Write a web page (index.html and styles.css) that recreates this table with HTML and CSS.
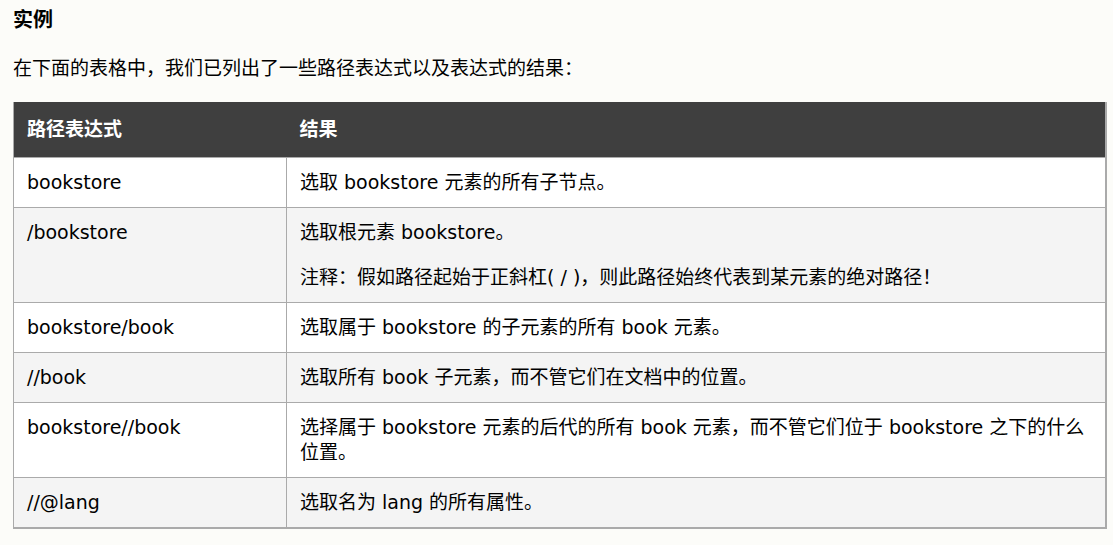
FILE: index.html
```html
<!DOCTYPE html>
<html lang="zh-CN">
<head>
<meta charset="utf-8">
<title>XPath 实例</title>
<link rel="stylesheet" href="styles.css">
</head>
<body>
<div class="page">
  <h2 class="title">实例</h2>
  <p class="intro">在下面的表格中，我们已列出了一些路径表达式以及表达式的结果：</p>
  <table class="data">
    <thead>
      <tr><th class="c1">路径表达式</th><th>结果</th></tr>
    </thead>
    <tbody>
      <tr><td class="c1">bookstore</td><td>选取 bookstore 元素的所有子节点。</td></tr>
      <tr class="alt"><td class="c1">/bookstore</td><td><p class="cp">选取根元素 bookstore。</p><p class="cp note">注释：假如路径起始于正斜杠( / )，则此路径始终代表到某元素的绝对路径！</p></td></tr>
      <tr><td class="c1">bookstore/book</td><td>选取属于 bookstore 的子元素的所有 book 元素。</td></tr>
      <tr class="alt"><td class="c1">//book</td><td>选取所有 book 子元素，而不管它们在文档中的位置。</td></tr>
      <tr><td class="c1">bookstore//book</td><td>选择属于 bookstore 元素的后代的所有 book 元素，而不管它们位于 bookstore 之下的什么位置。</td></tr>
      <tr class="alt"><td class="c1">//@lang</td><td>选取名为 lang 的所有属性。</td></tr>
    </tbody>
  </table>
</div>
</body>
</html>
```
FILE: styles.css
```css
html, body {
  margin: 0;
  padding: 0;
  background: #fcfcf9;
}
body {
  font-family: "DejaVu Sans", Verdana, "Noto Sans CJK SC", sans-serif;
  font-size: 19px;
  color: #000;
}
.page {
  padding: 6px 6px 0 13px;
}
.title {
  margin: 0;
  font-size: 20px;
  line-height: 28px;
  font-weight: bold;
}
.intro {
  margin: 20px 0 0 0;
  line-height: 28px;
}
.data {
  margin-top: 20px;
  width: 1094px;
  border-collapse: collapse;
  border-left: 1px solid #aaa;
  border-right: 2px solid #aaa;
  border-bottom: 2px solid #aaa;
}
.data th {
  background: #3f3f3f;
  color: #fff;
  font-weight: bold;
  text-align: left;
  line-height: 25px;
  padding: 15px 13px;
  border: none;
}
.data td {
  vertical-align: top;
  line-height: 25px;
  padding: 12px 13px 12px 13px;
  border: 1px solid #aaa;
  background: #fff;
}
.data .c1 {
  width: 246px;
}
.data tr.alt td {
  background: #f4f4f4;
}
.cp {
  margin: 0;
}
.cp.note {
  margin-top: 20px;
}
```
